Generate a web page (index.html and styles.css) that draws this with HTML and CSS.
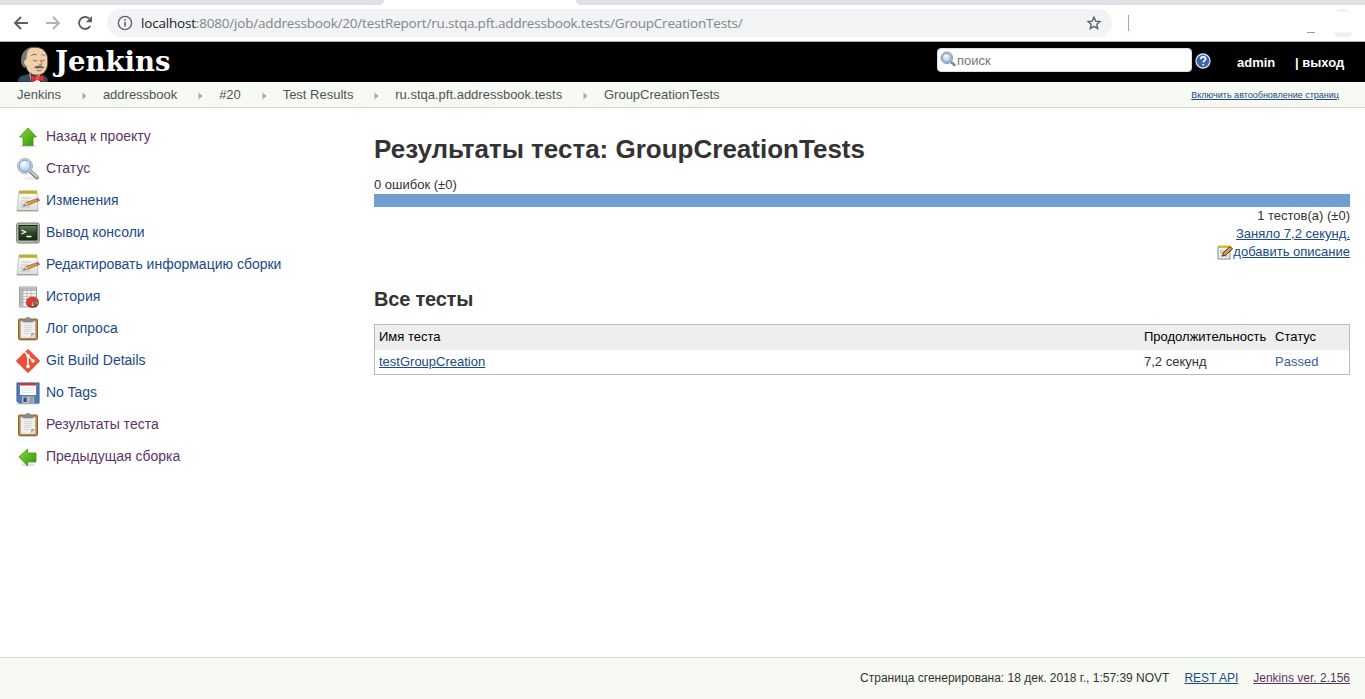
FILE: index.html
```html
<!DOCTYPE html>
<html lang="ru">
<head>
<meta charset="utf-8">
<title>Результаты теста: GroupCreationTests</title>
<link rel="stylesheet" href="styles.css">
</head>
<body>
<svg width="0" height="0" class="defs" aria-hidden="true">
  <defs>
    <linearGradient id="green" x1="0" y1="0" x2="1" y2="1"><stop offset="0" stop-color="#83df32"/><stop offset="1" stop-color="#36910c"/></linearGradient>
    <radialGradient id="lens" cx=".4" cy=".3" r=".8"><stop offset="0" stop-color="#fff"/><stop offset="1" stop-color="#8db9e8"/></radialGradient>
    <linearGradient id="screen" x1="0" y1="0" x2="0" y2="1"><stop offset="0" stop-color="#64805a"/><stop offset=".5" stop-color="#2e4628"/><stop offset="1" stop-color="#172b13"/></linearGradient>
    <linearGradient id="paper" x1="0" y1="0" x2="0" y2="1"><stop offset="0" stop-color="#fff"/><stop offset="1" stop-color="#dcdcda"/></linearGradient>
    <symbol id="magnifier" viewBox="0 0 24 24">
      <ellipse cx="15" cy="21.500" rx="7" ry="1.500" fill="#ecece9"/>
      <path d="M14.500 14.500l6.500 6" stroke="#888" stroke-width="4" stroke-linecap="round"/>
      <path d="M15.500 14.800l5.300 5" stroke="#d2d2d2" stroke-width="1.800" stroke-linecap="round"/>
      <circle cx="9" cy="9" r="7.500" fill="#eee" stroke="#a7abb0" stroke-width="1"/>
      <circle cx="9" cy="9" r="6" fill="url(#lens)" stroke="#7093c4" stroke-width="1"/>
    </symbol>
    <symbol id="notepad" viewBox="0 0 24 24">
      <path d="M3 3h18l1 19H1z" fill="url(#paper)" stroke="#b7b7b0" stroke-width=".8"/>
      <path d="M1 21.700h21" stroke="#999993" stroke-width="1"/>
      <path d="M3 1.500h18v3.500H3z" fill="#e2cb60"/>
      <path d="M4 1.500v3m2-3v3m2-3v3m2-3v3m2-3v3m2-3v3m2-3v3m2-3v3m2-3v3" stroke="#8f7820" stroke-width=".8"/>
      <path d="M5 9h10M4.500 12h8M4 15h6M4 18h11" stroke="#bbb" stroke-width=".8"/>
      <path d="M7 17l3-3.500 12-4 1.300 2-11 4.500z" fill="#dfa04c" stroke="#845323" stroke-width=".7"/>
      <path d="M7 17l3-3.500 2 2.500z" fill="#f0d3a2"/><path d="M7 17l2-1.500.5 1z" fill="#333"/>
      <path d="M20.500 10l2-.7 1.200 2-2 .9z" fill="#cd5450"/>
    </symbol>
    <symbol id="clipboard" viewBox="0 0 24 24">
      <ellipse cx="12" cy="23" rx="10" ry="1" fill="#ccc"/>
      <rect x="2.500" y="2" width="19" height="20.500" rx="1" fill="#b9803a" stroke="#936629"/>
      <path d="M4.500 4h15v17h-15z" fill="#eeeeec" stroke="#aaa" stroke-width=".5"/>
      <path d="M8 8.500h8m-8 2h8m-8 2h8m-8 2h7m-7 2h5" stroke="#d7d7d5" stroke-width="1"/>
      <path d="M19 16h-4v4.500z" fill="#aaa"/><path d="M19 16v4.500h-4z" fill="#ddd"/>
      <path d="M7 5V2.500h2.500L10.500.5h3l1 2H17V5z" fill="#8d8f8c" stroke="#777976" stroke-width=".6"/>
    </symbol>
    <symbol id="crumb-arrow" viewBox="0 0 5 8"><path d="M.5.5L4.500 4 .5 7.500z" fill="#aaa"/></symbol>
  </defs>
</svg>

<div class="browser">
  <div class="tabs"><i class="tab-left"></i><i class="tab-right"></i></div>
  <div class="toolbar">
    <svg class="nav" viewBox="0 0 16 16"><path d="M15 8H2.200M8 2L2 8l6 6" class="line"/></svg>
    <svg class="nav faded" viewBox="0 0 16 16"><path d="M1 8h12.800M8 2l6 6-6 6" class="line"/></svg>
    <svg class="nav" viewBox="0 0 16 16"><path d="M13.200 11A6 6 0 1 1 12.300 3.700" class="line"/><path d="M15 1v6.200H8.800z" fill="#5b5f63"/></svg>
    <div class="address">
      <svg class="info" viewBox="0 0 16 16"><circle cx="8" cy="8" r="6.600" fill="none" stroke="#5f6368" stroke-width="1.400"/><path d="M8 7v4.500M8 4.200v1.600" stroke="#5f6368" stroke-width="1.600"/></svg>
      <span class="url"><b>localhost</b>:8080/job/addressbook/20/testReport/ru.stqa.pft.addressbook.tests/GroupCreationTests/</span>
      <svg class="star" viewBox="0 0 16 16"><path d="M8 2.200l1.700 3.900 4.200.4-3.100 2.800.9 4.200L8 11.400l-3.700 2.100.9-4.200-3.100-2.800 4.200-.4z" fill="none" stroke="#5b5f63" stroke-width="1.400"/></svg>
    </div>
    <i class="red-bar"></i><i class="dash"></i>
    <svg class="avatar" viewBox="0 0 22 28"><path d="M4 2.500a11 11 0 0 1 14 0zM1 23.500h20a12 12 0 0 1-20 0z" fill="#eee"/></svg>
  </div>
</div>

<header class="top">
  <a class="logo">
    <svg class="butler" viewBox="0 0 34 36">
      <path d="M1 36c0-4 2-6 7-7l8-2 9 2c5 1 6 3 6 7z" fill="#31505f" stroke="#162b36"/>
      <path d="M12 26l4 7 7-5v8h-9z" fill="#eee"/>
      <path d="M5 12C6 4 12 .8 18 1.200c9 0 13 6 12.800 14 .2 9-4 14-11 14-6 0-10-4-11-9-2.500-1-4-3.800-3.800-8.200z" fill="#efcfac" stroke="#514339" stroke-width="1"/>
      <path d="M4.200 15C4 7 8.500 1.800 16 1.200c-4 1.300-6 3.800-6 7.300L9 14c-3 0-2 5 .5 6.500L8 22c-3-1.500-4-4-3.800-7z" fill="#7e7875"/>
      <path d="M14.500 10c1-2 3-2 5-1m5 0c1.500-1 2.500 0 3.500 1m-12 4c1.500 1.300 3 1.300 4.500 0m4 0c1 .8 2 .8 3 0m-4.500 0c1 2 3 4 1 5h-2" fill="none" stroke="#6b5444" stroke-width=".9"/>
      <path d="M17.500 21.500c2-2 4-1.200 5.500-1.300 1.500-.2 3 .3 4 1.500-2 .8-3 .2-4 .1-1.500.3-3 .8-5.500-.3m2 2.800c2 .8 4 .6 5.500-.2" fill="#705d50" stroke="#705d50" stroke-width=".6"/>
      <path d="M14 29l6 2.500L27 29v7l-7-2.500-6 3z" fill="#db3434" stroke="#7e1f22" stroke-width=".8"/><circle cx="20.500" cy="32" r="2" fill="#ea4b49"/>
    </svg>
    <span>Jenkins</span>
  </a>
  <div class="search">
    <svg viewBox="0 0 16 16"><path d="M11 11l3.500 3" stroke="#888" stroke-width="2.600" stroke-linecap="round"/><circle cx="6.800" cy="6.800" r="5.900" fill="#dde2e8" stroke="#8b9098" stroke-width=".9"/><circle cx="6.800" cy="6.800" r="4.500" fill="url(#lens)" stroke="#5f8bc5" stroke-width=".9"/></svg><span>поиск</span>
  </div>
  <svg class="help" viewBox="0 0 16 16"><circle cx="8" cy="8" r="7" fill="#3865a8" stroke="#d4e1f2" stroke-width="1.300"/><path d="M5.800 6.200c0-3.200 4.700-2.900 4.700-.3 0 1.600-2.200 1.700-2.200 3.500m0 1.500v1.700" fill="none" stroke="#fff" stroke-width="1.700"/></svg>
  <a class="user">admin</a>
  <a class="logout">| выход</a>
</header>

<nav class="crumbs">
  <a>Jenkins</a><svg><use href="#crumb-arrow"/></svg>
  <a>addressbook</a><svg><use href="#crumb-arrow"/></svg>
  <a>#20</a><svg><use href="#crumb-arrow"/></svg>
  <a>Test Results</a><svg><use href="#crumb-arrow"/></svg>
  <a>ru.stqa.pft.addressbook.tests</a><svg><use href="#crumb-arrow"/></svg>
  <a>GroupCreationTests</a>
  <a class="refresh">Включить автообновление страниц</a>
</nav>

<div class="page">
  <aside class="tasks">
    <a class="visited"><svg viewBox="0 0 24 24"><ellipse cx="12" cy="21" rx="8" ry="1.500" fill="#ddd"/><path d="M12 3l8.500 9H17v8.500H7V12H3.500z" fill="url(#green)" stroke="#46951f" stroke-width=".8"/></svg><span>Назад к проекту</span></a>
    <a class="visited"><svg viewBox="0 0 24 24"><use href="#magnifier"/></svg><span>Статус</span></a>
    <a><svg viewBox="0 0 24 24"><use href="#notepad"/></svg><span>Изменения</span></a>
    <a><svg viewBox="0 0 24 24"><rect x=".7" y="2" width="22.600" height="20" rx="1.800" fill="#b9bbb7" stroke="#777a75"/><rect x="3" y="4.500" width="18" height="14.500" fill="url(#screen)" stroke="#152112"/><path d="M5.500 9l4 2-4 2m5 2.500h5" fill="none" stroke="#fff" stroke-width="1.300"/><path d="M18 20.500h2" stroke="#7ba864"/></svg><span>Вывод консоли</span></a>
    <a><svg viewBox="0 0 24 24"><use href="#notepad"/></svg><span>Редактировать информацию сборки</span></a>
    <a><svg viewBox="0 0 24 24"><path d="M3.500 2h17v20h-17z" fill="#f0f0f0" stroke="#a0a0a0"/><path d="M4 2.500h16v3H4zM4 3h3v19H4z" fill="#bbb"/><path d="M4 5.500h16M4 8.500h16M4 11.500h16M4 14.500h16M4 17.500h16M7 3v19m4-19v19m4-19v19" stroke="#aaa" stroke-width=".6"/><ellipse cx="16.500" cy="18" rx="6.300" ry="4.700" fill="#8f1717"/><ellipse cx="16.500" cy="16.500" rx="6.300" ry="4.800" fill="#dc3937"/><path d="M16.500 16.500l-1 4.700 3 .1z" fill="#e4b43c"/><path d="M16.500 16.500l2 4.800 3.500-2z" fill="#4069a9"/><path d="M16.500 16.500l5.500 2.800.6-2z" fill="#76a84b"/></svg><span>История</span></a>
    <a><svg viewBox="0 0 24 24"><use href="#clipboard"/></svg><span>Лог опроса</span></a>
    <a><svg viewBox="0 0 24 24"><path d="M12 1.200L22.800 12 12 22.800 1.200 12z" fill="#ec5038" stroke="#ec5038" stroke-width="2" stroke-linejoin="round"/><path d="M8.500 2.500L12 6.500v11M12 7l5 4.700" fill="none" stroke="#fff" stroke-width="1.500"/><circle cx="12" cy="6.800" r="1.800" fill="#fff"/><circle cx="12" cy="17.500" r="1.800" fill="#fff"/><circle cx="17" cy="12" r="1.800" fill="#fff"/></svg><span>Git Build Details</span></a>
    <a><svg viewBox="0 0 24 24"><path d="M0 1h24v23H0z" fill="#e7e9ee"/><path d="M1 2h22v20H3l-2-2z" fill="#517db8" stroke="#3e6299"/><path d="M4 2h16v12H4z" fill="#fff"/><path d="M4 2h16v2.500H4z" fill="#cc363a"/><path d="M6 7.500h12m-12 2h12m-12 2h12" stroke="#ddd" stroke-width=".8"/><path d="M6 15.500h12V22H6z" fill="#bcbfc2"/><path d="M7.500 16.500h3.300V21H7.500z" fill="#37547c"/><path d="M14 16h3v6h-4z" fill="#999"/></svg><span>No Tags</span></a>
    <a class="visited"><svg viewBox="0 0 24 24"><use href="#clipboard"/></svg><span>Результаты теста</span></a>
    <a class="visited"><svg viewBox="0 0 24 24"><ellipse cx="12" cy="20" rx="7" ry="1.500" fill="#e2e2df"/><path d="M3 12l8.500-8v4H20v9h-8.500v4z" fill="url(#green)" stroke="#46951f" stroke-width=".8"/></svg><span>Предыдущая сборка</span></a>
  </aside>

  <main class="content">
    <h1><span>Результаты теста:</span> <span>GroupCreationTests</span></h1>
    <div class="failures">0 ошибок (±0)</div>
    <div class="bar"></div>
    <div class="summary">
      <span>1 тестов(а) (±0)</span>
      <a class="link">Заняло 7,2 секунд.</a>
      <span class="describe"><svg viewBox="0 0 16 16"><path d="M1 2.500h12V15H1z" fill="#f0f0ee" stroke="#888"/><path d="M1 1.500h12v2.500H1z" fill="#d5b929"/><path d="M3 7h6M3 9h4m-4 3h8" stroke="#aaa"/><path d="M5.500 12l1-3.500 6.700-6L15.500 5l-7 6.200z" fill="#d99c47" stroke="#49351e"/></svg><a class="link">добавить описание</a></span>
    </div>
    <h2>Все тесты</h2>
    <table class="results">
      <colgroup><col><col class="duration"><col class="status"></colgroup>
      <tr class="head"><td>Имя теста</td><td>Продолжительность</td><td>Статус</td></tr>
      <tr><td><a class="link">testGroupCreation</a></td><td>7,2 секунд</td><td class="passed">Passed</td></tr>
    </table>
  </main>
</div>

<footer class="footer">
  <span>Страница сгенерирована: 18 дек. 2018 г., 1:57:39 NOVT</span>
  <a class="link">REST API</a>
  <a class="link seen">Jenkins ver. 2.156</a>
</footer>
</body>
</html>
```
FILE: styles.css
```css
* { box-sizing: border-box; }
body {
  margin: 0;
  height: 699px;
  display: flex;
  flex-direction: column;
  overflow: hidden;
  background: #fff;
  color: #333;
  font: 13px/18px "Liberation Sans", Arial, sans-serif;
}
svg { display: block; flex: none; }
.defs { position: absolute; }

.browser { height: 42px; border-bottom: 1px solid #aaa; flex: none; }
.tabs { height: 5px; display: flex; justify-content: space-between; }
.tabs i { background: #dee1e6; height: 5px; }
.tab-left { width: 384px; border-bottom-right-radius: 5px; }
.tab-right { width: 789px; border-bottom-left-radius: 5px; }
.toolbar { height: 36px; display: flex; align-items: center; padding-left: 13px; }
.nav { width: 16px; height: 16px; margin-right: 16px; }
.line { fill: none; stroke: #5b5f63; stroke-width: 1.900; }
.faded { opacity: .48; }
.address { width: 1005px; height: 28px; margin-left: -2px; padding: 0 10px; border-radius: 14px; background: #f1f3f4; display: flex; align-items: center; }
.info { width: 16px; height: 16px; margin-right: 8px; }
.url { color: #80868b; font: 13.500px/20px "Open Sans", sans-serif; letter-spacing: -.19px; white-space: nowrap; }
.url b { color: #202124; font-weight: 400; }
.star { width: 16px; height: 16px; margin-left: auto; }
.red-bar { width: 1px; height: 16px; margin-left: 16px; background: #d9958d; }
.dash { width: 8px; height: 1px; margin: 19px 0 0 178px; background: #999; }
.avatar { width: 22px; height: 28px; margin-left: 17px; }

.top { height: 40px; flex: none; padding-left: 17px; display: flex; background: #000; color: #fff; }
.logo { width: 920px; display: flex; }
.butler { width: 34px; height: 36px; margin-top: 4px; }
.logo span { margin: 2px 0 0 4px; font: bold 27.500px/34px "DejaVu Serif", serif; }
.search { width: 255px; height: 24px; margin-top: 6px; padding-left: 2px; border-radius: 4px; border: 1px solid #ddd; background: #fff; color: #757575; display: flex; align-items: center; }
.search svg { width: 16px; height: 16px; margin: 0 1px 2px 0; }
.search span { padding-top: 2px; line-height: 20px; }
.help { width: 16px; height: 16px; margin: 11px 0 0 3px; }
.user, .logout { font-weight: bold; line-height: 42px; height: 40px; }
.user { width: 58px; margin-left: 26px; }

.crumbs { height: 26px; flex: none; padding: 1px 26px 0 17px; border-bottom: 1px solid #d3d7cf; background: #f6faf2; color: #4d545d; display: flex; align-items: center; }
.crumbs > a { white-space: nowrap; }
.crumbs > svg { width: 5px; height: 8px; margin: 1px 15.800px 0 21px; }
.crumbs .refresh { margin-left: auto; color: #204a87; font-size: 9px; text-decoration: underline; }

.page { flex: 1; display: flex; padding: 12px 15px 0 16px; }
.tasks { width: 358px; flex: none; }
.tasks a { height: 32px; display: flex; align-items: center; color: #204a87; font-size: 14px; }
.tasks a.visited { color: #5c3566; }
.tasks svg { width: 24px; height: 24px; margin-top: 2px; }
.tasks span { margin-left: 6px; }
.content { flex: 1; }
h1 { margin: 14px 0 11px; font-size: 26px; line-height: 31px; white-space: nowrap; }
h2 { margin: 26px 0 12px; font-size: 20px; line-height: 25px; letter-spacing: -.2px; }
.failures { height: 18px; }
.bar { height: 13px; background: #729fcf; }
.summary { display: flex; flex-direction: column; align-items: flex-end; }
.link { color: #204a87; text-decoration: underline; }
.seen { color: #5c3566; }
.describe { display: flex; align-items: center; }
.describe svg { width: 16px; height: 16px; }
.results { width: 100%; table-layout: fixed; border: 1px solid #bbb; border-spacing: 0; }
.results td { height: 24.500px; padding: 0 4px; line-height: 24px; }
.results .head { background: #eee; color: #000; }
.duration { width: 131px; }
.status { width: 78px; }
.results .passed { color: #3b5c9b; }

.footer { height: 42px; flex: none; padding: 0 15px 2px; border-top: 1px solid #d3d7cf; background: #f6faf2; display: flex; align-items: center; justify-content: flex-end; gap: 15px; font-size: 12px; }
```
